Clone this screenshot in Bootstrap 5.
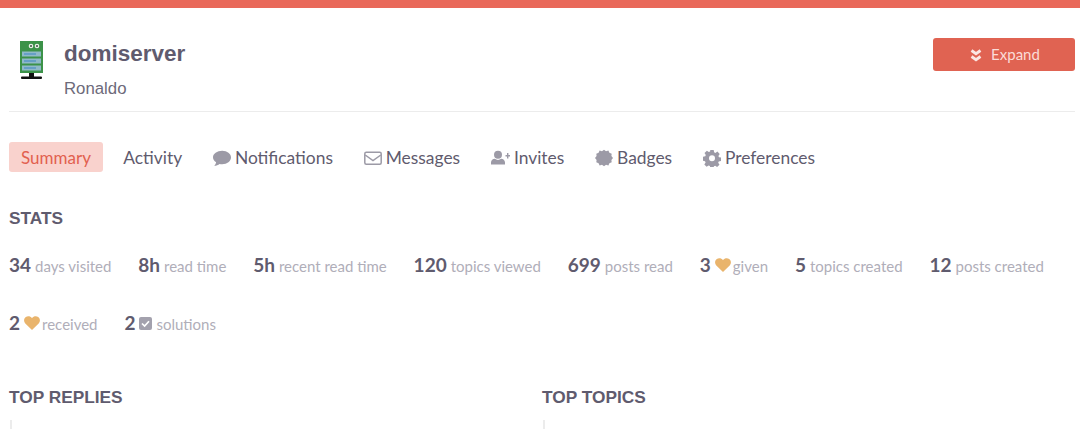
<!DOCTYPE html>
<html lang="en">
<head>
  <meta charset="UTF-8">
  <title>domiserver</title>
  <link href="https://cdn.jsdelivr.net/npm/bootstrap@5.3.0/dist/css/bootstrap.min.css" rel="stylesheet">
  <style>
    html, body {
      height: 429px;
      overflow: hidden;
    }
    body {
      background-color: #ffffff;
      font-family: "Lato", sans-serif;
      color: #5f5b6e;
    }
    .top-stripe {
      height: 8px;
      background-color: #e9695a;
    }
    .page-wrap {
      padding: 0 5px 0 9px;
    }
    .user-head {
      height: 104px;
      border-bottom: 1px solid #ececec;
    }
    .user-pic {
      width: 24px;
      height: 40px;
      margin: 33px 0 0 10px;
    }
    .user-names {
      margin: 32px 0 0 21px;
    }
    .user-name {
      font-family: "Liberation Sans", sans-serif;
      font-size: 22.5px;
      font-weight: 700;
      line-height: 28px;
      color: #5f5b6e;
    }
    .user-full {
      font-family: "Liberation Sans", sans-serif;
      font-size: 16.8px;
      line-height: 20px;
      margin-top: 11px;
      color: #6d6a7a;
    }
    .btn-expand {
      width: 142px;
      height: 33px;
      margin-top: 30px;
      padding: 0 0 0 2px;
      border: 0;
      border-radius: 3px;
      background-color: #e06352;
      color: #fbdcd7;
      font-size: 15px;
      line-height: 33px;
    }
    .btn-expand:hover {
      background-color: #d55241;
      color: #fbdcd7;
    }
    .btn-expand svg {
      width: 12px;
      height: 13px;
      margin-right: 9px;
      vertical-align: -2px;
    }
    .tab-row {
      margin-top: 30px;
      gap: 6.8px;
    }
    .tab-link {
      display: flex;
      align-items: center;
      height: 30px;
      padding: 2px 12px 0;
      border-radius: 3px;
      font-size: 17.4px;
      color: #5f5b6e;
      text-decoration: none;
    }
    .tab-link svg {
      fill: #9c9aa6;
      margin-right: 4px;
    }
    .tab-on {
      font-size: 17px;
      margin-right: 1.5px;
      background-color: #f9d2cd;
      color: #e2604f;
    }
    .part-title {
      font-family: "Liberation Sans", sans-serif;
      font-size: 17.3px;
      font-weight: 700;
      line-height: 20px;
      color: #5f5b6e;
      margin: 0;
    }
    .stats-title {
      margin-top: 36px;
    }
    .stat-list {
      margin-top: 25px;
      column-gap: 26.9px;
      row-gap: 34px;
      width: 1066px;
    }
    .stat-item {
      display: flex;
      align-items: baseline;
      line-height: 24px;
      height: 24px;
      font-size: 15px;
      color: #b0aeb9;
    }
    .stat-num {
      font-size: 19px;
      font-weight: 700;
      color: #5f5b6e;
      margin-right: 4px;
    }
    .stat-item svg {
      align-self: center;
    }
    .stat-heart {
      margin-right: 2px;
    }
    .stat-check {
      margin-right: 4px;
    }
    .top-cols {
      margin-top: 52px;
    }
    .top-col {
      width: 533px;
    }
    .top-col-line {
      width: 2px;
      height: 12px;
      margin: 13px 0 0 1px;
      background-color: #ececec;
    }
  </style>
</head>
<body>

<div class="top-stripe"></div>

<div class="page-wrap">
  <div class="user-head d-flex justify-content-between">
    <div class="d-flex">
      <svg class="user-pic" viewBox="0 0 24 40">
        <rect x="1" y="0" width="23" height="32" fill="#3c9249"/>
        <circle cx="12" cy="5" r="2.300" fill="#e8efe6"/>
        <circle cx="18" cy="5" r="2.300" fill="#e8efe6"/>
        <circle cx="12" cy="5" r="1" fill="#3a4a40"/>
        <circle cx="18" cy="5" r="1" fill="#3a4a40"/>
        <rect x="3" y="10.500" width="19" height="5" fill="#8fb9c9"/>
        <rect x="3" y="17.500" width="19" height="5" fill="#8fb9c9"/>
        <rect x="3" y="24.500" width="19" height="5" fill="#8fb9c9"/>
        <rect x="5" y="12.500" width="12" height="1" fill="#3f86c4"/>
        <rect x="5" y="19.500" width="12" height="1" fill="#3f86c4"/>
        <rect x="5" y="26.500" width="12" height="1" fill="#3f86c4"/>
        <rect x="10" y="32" width="5" height="4" fill="#111"/>
        <rect x="2" y="35.500" width="21" height="2.500" rx="1" fill="#111"/>
      </svg>
      <div class="user-names">
        <div class="user-name">domiserver</div>
        <div class="user-full">Ronaldo</div>
      </div>
    </div>
    <button type="button" class="btn btn-expand">
      <svg viewBox="0 0 12 13"><path d="M1.500 1.500l4.500 3.200 4.500-3.200M1.500 7.500l4.500 3.200 4.500-3.200" fill="none" stroke="#fbe6e3" stroke-width="2.800"/></svg>Expand
    </button>
  </div>

  <div class="tab-row d-flex">
    <a class="tab-link tab-on" href="#">Summary</a>
    <a class="tab-link" href="#">Activity</a>
    <a class="tab-link" href="#">
      <svg width="18" height="16" viewBox="0 0 18 16"><path d="M9.200 .8c4.900 0 8.800 3 8.800 6.700s-3.900 6.700-8.800 6.700c-.9 0-1.800-.1-2.700-.3C5.300 14.900 3.400 15.800 1.200 15.800c1-1 1.700-2.300 1.900-3.600C1.100 11 0 9.300 0 7.500 0 3.800 4.100 .8 9.200 .8z"/></svg>Notifications
    </a>
    <a class="tab-link" href="#">
      <svg width="18" height="16" viewBox="0 0 18 16"><rect x=".8" y="2.200" width="16.400" height="12" rx="1.500" fill="none" stroke="#9c9aa6" stroke-width="1.500"/><path d="M1.200 5l7.800 5.500L16.800 5" fill="none" stroke="#9c9aa6" stroke-width="1.500"/></svg>Messages
    </a>
    <a class="tab-link" href="#">
      <svg width="19" height="16" viewBox="0 0 19 16"><circle cx="7" cy="4.800" r="4"/><path d="M0 14.500v-2C0 10.300 1.900 8.800 3.800 8.800c1 .7 2 1.100 3.200 1.100s2.200-.4 3.200-1.100c1.900 0 3.800 1.500 3.800 3.700v2z"/><path d="M14.500 5H16V3h1.400v2H19v1.400h-1.600v2H16v-2h-1.500z"/></svg>Invites
    </a>
    <a class="tab-link" href="#">
      <svg width="18" height="18" viewBox="0 0 18 18"><path d="M9 .8l2 1.400 2.400-.6 1 2.200 2.300.9-.3 2.400L18 9l-1.600 1.900.3 2.400-2.300.9-1 2.200-2.400-.6L9 17.200l-2-1.400-2.400.6-1-2.200-2.300-.9.3-2.400L0 9l1.600-1.900-.3-2.400 2.300-.9 1-2.200 2.400.6z"/></svg>Badges
    </a>
    <a class="tab-link" href="#">
      <svg width="18" height="18" viewBox="0 0 18 18"><path fill-rule="evenodd" d="M7.300 1h3.400l.4 2.300 1.300.6 2-1.300 2.300 2.400-1.300 1.900.6 1.300 2 .4v3.400l-2.300.4-.5 1.300 1.300 2-2.400 2.300-1.900-1.300-1.300.6-.4 2H7.300l-.4-2.300-1.300-.5-2 1.300-2.300-2.400 1.300-1.900-.6-1.300-2-.4V7.700l2.300-.4.5-1.300-1.300-2 2.400-2.300 1.900 1.300 1.300-.6zM9 6.200a3 3 0 100 6 3 3 0 000-6z"/></svg>Preferences
    </a>
  </div>

  <h3 class="part-title stats-title">STATS</h3>
  <div class="stat-list d-flex flex-wrap">
    <div class="stat-item"><span class="stat-num">34</span>days visited</div>
    <div class="stat-item"><span class="stat-num">8h</span>read time</div>
    <div class="stat-item"><span class="stat-num">5h</span>recent read time</div>
    <div class="stat-item"><span class="stat-num">120</span>topics viewed</div>
    <div class="stat-item"><span class="stat-num">699</span>posts read</div>
    <div class="stat-item"><span class="stat-num">3</span><svg class="stat-heart" width="16" height="14" viewBox="0 0 16 14"><path d="M8 14L1.300 7.500C-.5 5.700-.3 2.600 1.800 1.100 3.700-.3 6.500.1 8 2.200 9.500.1 12.300-.3 14.200 1.100c2.100 1.500 2.300 4.600.5 6.400z" fill="#e9b46c"/></svg>given</div>
    <div class="stat-item"><span class="stat-num">5</span>topics created</div>
    <div class="stat-item"><span class="stat-num">12</span>posts created</div>
    <div class="stat-item"><span class="stat-num">2</span><svg class="stat-heart" width="16" height="14" viewBox="0 0 16 14"><path d="M8 14L1.300 7.500C-.5 5.700-.3 2.600 1.800 1.100 3.700-.3 6.500.1 8 2.200 9.500.1 12.300-.3 14.200 1.100c2.100 1.500 2.300 4.600.5 6.400z" fill="#e9b46c"/></svg>received</div>
    <div class="stat-item"><span class="stat-num">2</span><svg class="stat-check" width="13" height="13" viewBox="0 0 13 13"><rect width="13" height="13" rx="2" fill="#a3a1ad"/><path d="M3 6.500l2.600 2.600L10 4.300" fill="none" stroke="#fff" stroke-width="1.700"/></svg>solutions</div>
  </div>

  <div class="top-cols d-flex">
    <div class="top-col">
      <h3 class="part-title">TOP REPLIES</h3>
      <div class="top-col-line"></div>
    </div>
    <div class="top-col">
      <h3 class="part-title">TOP TOPICS</h3>
      <div class="top-col-line"></div>
    </div>
  </div>
</div>

<script src="https://cdn.jsdelivr.net/npm/bootstrap@5.3.0/dist/js/bootstrap.bundle.min.js"></script>
</body>
</html>
